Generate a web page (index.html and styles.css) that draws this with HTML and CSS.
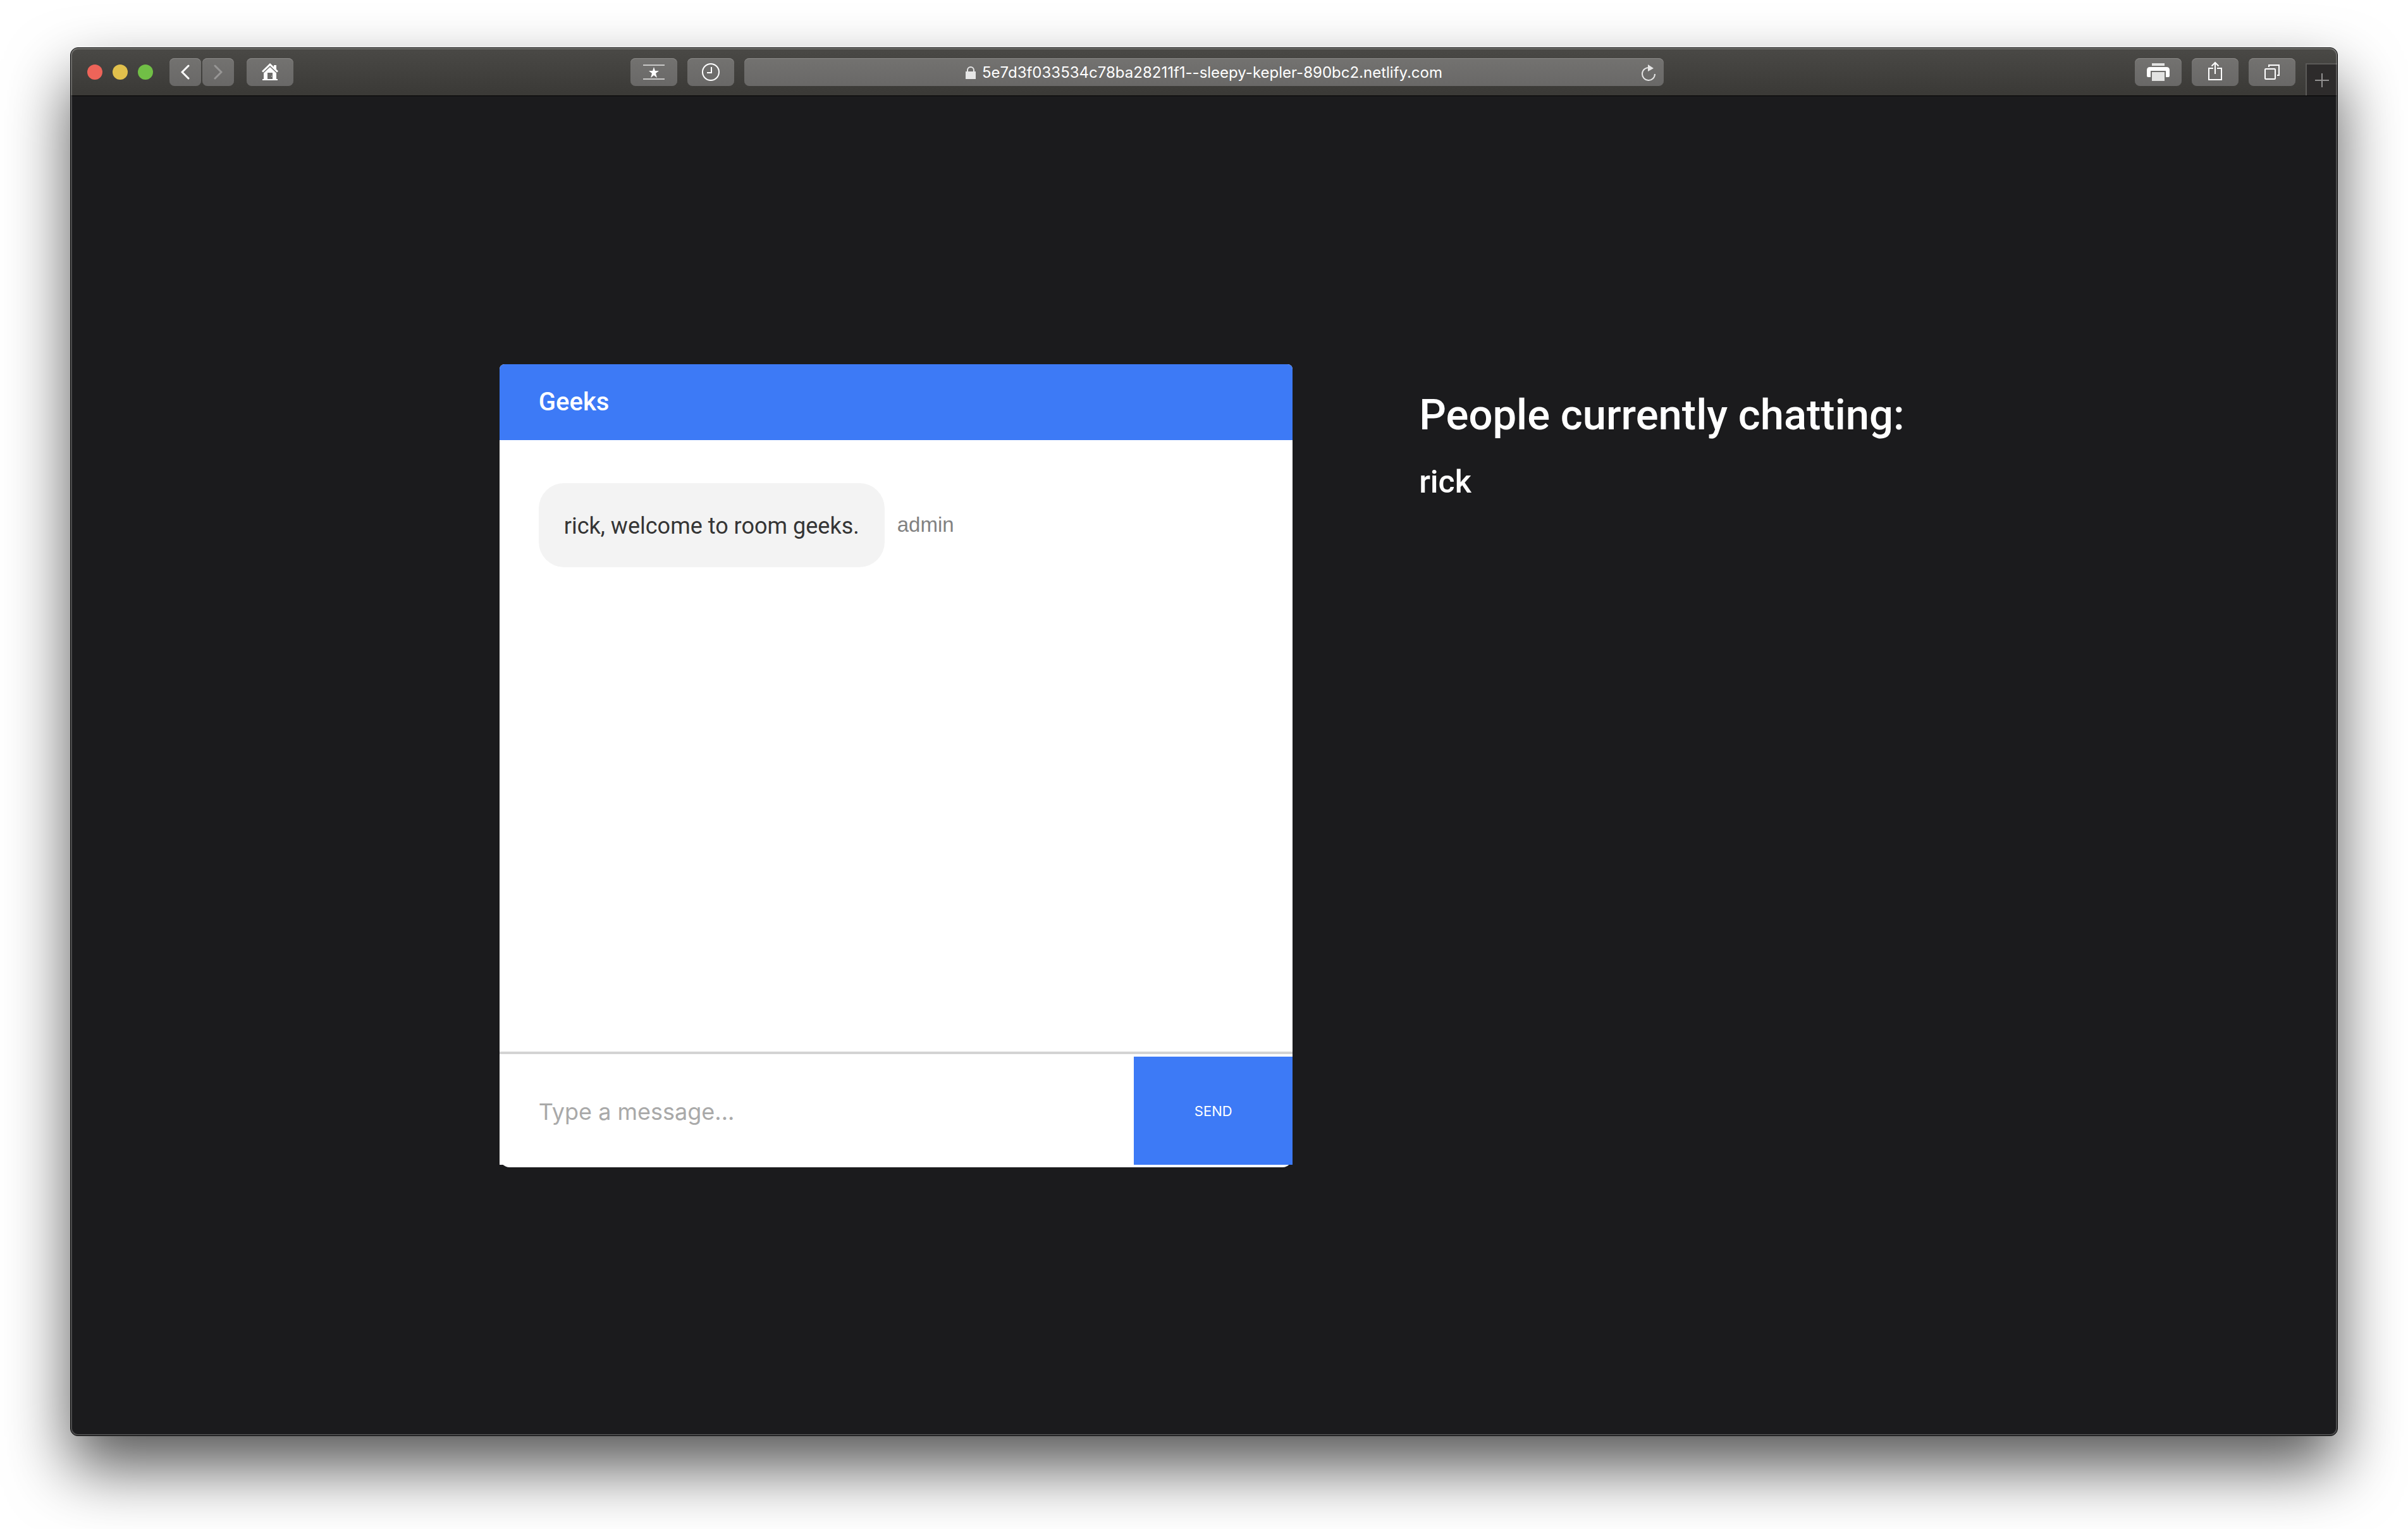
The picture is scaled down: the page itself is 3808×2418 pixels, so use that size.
FILE: index.html
```html
<!DOCTYPE html>
<html lang="en">
<head>
<meta charset="utf-8">
<title>Geeks chat</title>
<link rel="stylesheet" href="styles.css">
</head>
<body>
<div class="window">
  <header class="toolbar">
    <div class="tools">
      <div class="lights">
        <button class="light light-close" aria-label="Close"></button>
        <button class="light light-minimize" aria-label="Minimize"></button>
        <button class="light light-zoom" aria-label="Zoom"></button>
      </div>
      <div class="history">
        <button class="tool tool-narrow" aria-label="Back"><svg width="14" height="24" viewBox="0 0 14 24" fill="none" stroke="#fff" stroke-width="3" stroke-linecap="round"><path d="M12 2 2 12l10 10"/></svg></button>
        <button class="tool tool-narrow" aria-label="Forward"><svg width="14" height="24" viewBox="0 0 14 24" fill="none" stroke="#979695" stroke-width="3" stroke-linecap="round"><path d="M2 2l10 10L2 22"/></svg></button>
      </div>
      <button class="tool" aria-label="Home"><svg width="26" height="28" viewBox="0 0 26 28" fill="#fff"><path d="M19 3h4v9l-4-4z"/><path d="M1 13.500 13 2l12 11.500" fill="none" stroke="#fff" stroke-width="3"/><path fill-rule="evenodd" d="M3 15.500 13 6l10 9.500V25h2v2H1v-2h2zM9 15v10h8V15z"/><path d="M15 20h1v1h-1z"/></svg></button>
      <div class="pair">
        <button class="tool" aria-label="Top sites"><svg width="34" height="24" viewBox="0 0 34 24"><path d="M0 0h34v2H0zM0 22h34v2H0z" fill="#c8c8c7"/><path d="M17 4l2 6h6l-5 4 2 7-5-4-5 4 2-7-5-4h6z" fill="#fff"/></svg></button>
        <button class="tool" aria-label="Recent history"><svg width="28" height="28" viewBox="0 0 28 28" fill="none" stroke="#fff" stroke-width="2"><circle cx="14" cy="14" r="13"/><path d="M15 6v9H8"/></svg></button>
      </div>
    </div>
    <div class="address">
      <label class="address-field">
        <svg width="16" height="20" viewBox="0 0 16 20" aria-label="Secure address"><path d="M3 9V6a5 5 0 0 1 10 0v3" fill="none" stroke="#e6e6e6" stroke-width="2"/><path d="M0 8h16v12H0z" fill="#e6e6e6"/></svg>
        <input class="address-input" type="text" value="5e7d3f033534c78ba28211f1--sleepy-kepler-890bc2.netlify.com" aria-label="Address">
      </label>
      <button class="reload" aria-label="Reload"><svg width="24" height="26" viewBox="0 0 24 26"><path d="M13 5A10 10 0 1 0 22 15" fill="none" stroke="#e6e6e6" stroke-width="2"/><path d="M11 0l9 6-9 5z" fill="#e6e6e6"/></svg></button>
    </div>
    <div class="tools tools-end">
      <button class="tool" aria-label="Print"><svg width="36" height="28" viewBox="0 0 36 28"><path d="M8 0h20v4H8zM8 14h20v14H8z" fill="#e3e3e2"/><path d="M5 6h26q5 0 5 5v9q0 2-2 2h-4V12H6v10H2q-2 0-2-2v-9q0-5 5-5z" fill="#fff"/></svg></button>
      <button class="tool" aria-label="Share"><svg class="share-icon" width="22" height="30" viewBox="0 0 22 30" fill="none" stroke="#fff" stroke-width="2"><path d="M8 11H1v18h20V11h-7M11 20V2M5.500 7.500 11 2l5.500 5.500"/></svg></button>
      <button class="tool" aria-label="Show all tabs"><svg width="24" height="24" viewBox="0 0 24 24" fill="none" stroke="#fff" stroke-width="2"><rect x="1" y="7" width="16" height="16" rx="1"/><path d="M7 4V1h16v16h-3"/></svg></button>
      <button class="new-tab" aria-label="New tab"><svg width="22" height="22" viewBox="0 0 22 22"><path d="M10 0h2v10h10v2H12v10h-2V12H0v-2h10z" fill="#929191"/></svg></button>
    </div>
  </header>
  <main class="page">
    <section class="chat">
      <header class="chat-header"><h3 class="room">Geeks</h3></header>
      <div class="messages">
        <div class="message">
          <p class="bubble">rick, welcome to room geeks.</p>
          <p class="sender">admin</p>
        </div>
      </div>
      <form class="composer">
        <input class="message-input" type="text" placeholder="Type a message..." aria-label="Message">
        <button class="send" type="button">SEND</button>
      </form>
    </section>
    <aside class="people">
      <h1 class="people-title">People currently chatting:</h1>
      <h2 class="person">rick</h2>
    </aside>
  </main>
</div>
</body>
</html>
```
FILE: styles.css
```css
* {
  box-sizing: border-box;
}

body {
  margin: 0;
  min-height: 100vh;
  padding: 75px 111px 147px;
  display: flex;
  background: #fff;
  font-family: Roboto, "Liberation Sans", sans-serif;
}

h1, h2, h3, p {
  margin: 0;
}

button, input {
  border: 0;
  padding: 0;
  background: none;
  color: inherit;
  font-family: Inter, "Liberation Sans", sans-serif;
}

svg {
  display: block;
}

.window {
  position: relative;
  flex: 1;
  min-width: 0;
  display: flex;
  flex-direction: column;
  border: 1px solid #000;
  border-radius: 12px;
  background: #1b1b1d;
  box-shadow: 0 50px 100px rgba(0, 0, 0, 0.66);
}

/* Light rim along the inside of the window edge */
.window::after {
  content: "";
  position: absolute;
  inset: 0;
  border: 2px solid rgba(255, 255, 255, 0.22);
  border-radius: 11px;
  pointer-events: none;
}

.toolbar {
  display: grid;
  grid-template-columns: 1fr minmax(0, 1454px) 1fr;
  column-gap: 16px;
  height: 76px;
  padding-top: 16px;
  border-bottom: 1px solid #000;
  border-radius: 11px 11px 0 0;
  background: linear-gradient(#4a4946, #3a3936);
  color: #fff;
}

.tools {
  display: flex;
  align-items: flex-start;
  padding-left: 26px;
}

.tools-end {
  justify-content: flex-end;
  gap: 16px;
  padding-left: 0;
}

.lights {
  display: flex;
  gap: 16px;
  margin: 10px 26px 0 0;
}

.light {
  width: 24px;
  height: 24px;
  border-radius: 50%;
}

.light-close { background: #ee6459; }
.light-minimize { background: #e1c04c; }
.light-zoom { background: #71bf46; }

.history {
  display: flex;
  gap: 2px;
  margin-right: 20px;
}

.pair {
  display: flex;
  gap: 16px;
  margin-left: auto;
}

.tool,
.address {
  height: 44px;
  border-radius: 8px;
  background: linear-gradient(#737270, #696867);
  box-shadow: inset 0 1px 0 #8b8a88;
}

.tool {
  display: flex;
  align-items: center;
  justify-content: center;
  width: 74px;
}

.tool-narrow {
  width: 50px;
}

.share-icon {
  margin-bottom: 4px;
}

.address {
  display: grid;
  grid-template-columns: 1fr auto 1fr;
  align-items: center;
  padding: 2px 12px 0;
}

.address-field {
  grid-column: 2;
  display: flex;
  align-items: center;
  gap: 10px;
}

.address-input {
  field-sizing: content;
  font-size: 24px;
  line-height: 32px;
}

.reload {
  justify-self: end;
}

.new-tab {
  display: flex;
  align-items: center;
  justify-content: center;
  width: 50px;
  height: 51px;
  margin-top: 8px;
  border-top: 2px solid #5b5a58;
  border-left: 2px solid #5b5a58;
  background: #2d2b2b;
}

.page {
  flex: 1;
  display: flex;
  align-items: center;
  justify-content: center;
}

.chat {
  display: flex;
  flex-direction: column;
  width: 35%;
  height: 60%;
  border-radius: 8px 8px 16px 16px;
  background: #fff;
}

.chat-header {
  display: flex;
  align-items: center;
  height: 120px;
  padding: 0 62px;
  border-radius: 8px 8px 0 0;
  background: #3d7af6;
  color: #fff;
}

.room {
  font-size: 40px;
  line-height: 48px;
  font-weight: 500;
}

.messages {
  flex: 1;
  padding: 68px 62px;
}

.message {
  display: flex;
  align-items: center;
  gap: 20px;
}

.bubble {
  padding: 44px 40px 41px;
  border-radius: 40px;
  background: #f3f3f3;
  color: #353535;
  font-size: 36px;
  line-height: 48px;
}

.sender {
  color: #828282;
  font-family: "Liberation Sans", Arial, sans-serif;
  font-size: 33px;
  line-height: 48px;
}

.composer {
  display: flex;
  margin-bottom: 4px;
  padding-top: 4px;
  border-top: 4px solid #d3d3d3;
  background: #fff;
}

.message-input {
  flex: 1;
  min-width: 0;
  padding: 2px 62px 0;
  color: #353535;
  font-size: 36px;
}

.message-input::placeholder {
  color: #a9a9a9;
}

.send {
  width: 20%;
  height: 171px;
  background: #3d7af6;
  color: #fff;
  font-size: 22px;
}

.people {
  flex: 0 1 774px;
  height: 60%;
  margin-left: 200px;
  padding-top: 40px;
  color: #fff;
}

.people-title {
  font-size: 67px;
  line-height: 80px;
  font-weight: 500;
}

.person {
  margin-top: 38px;
  font-size: 50px;
  line-height: 56px;
  font-weight: 500;
}
```
